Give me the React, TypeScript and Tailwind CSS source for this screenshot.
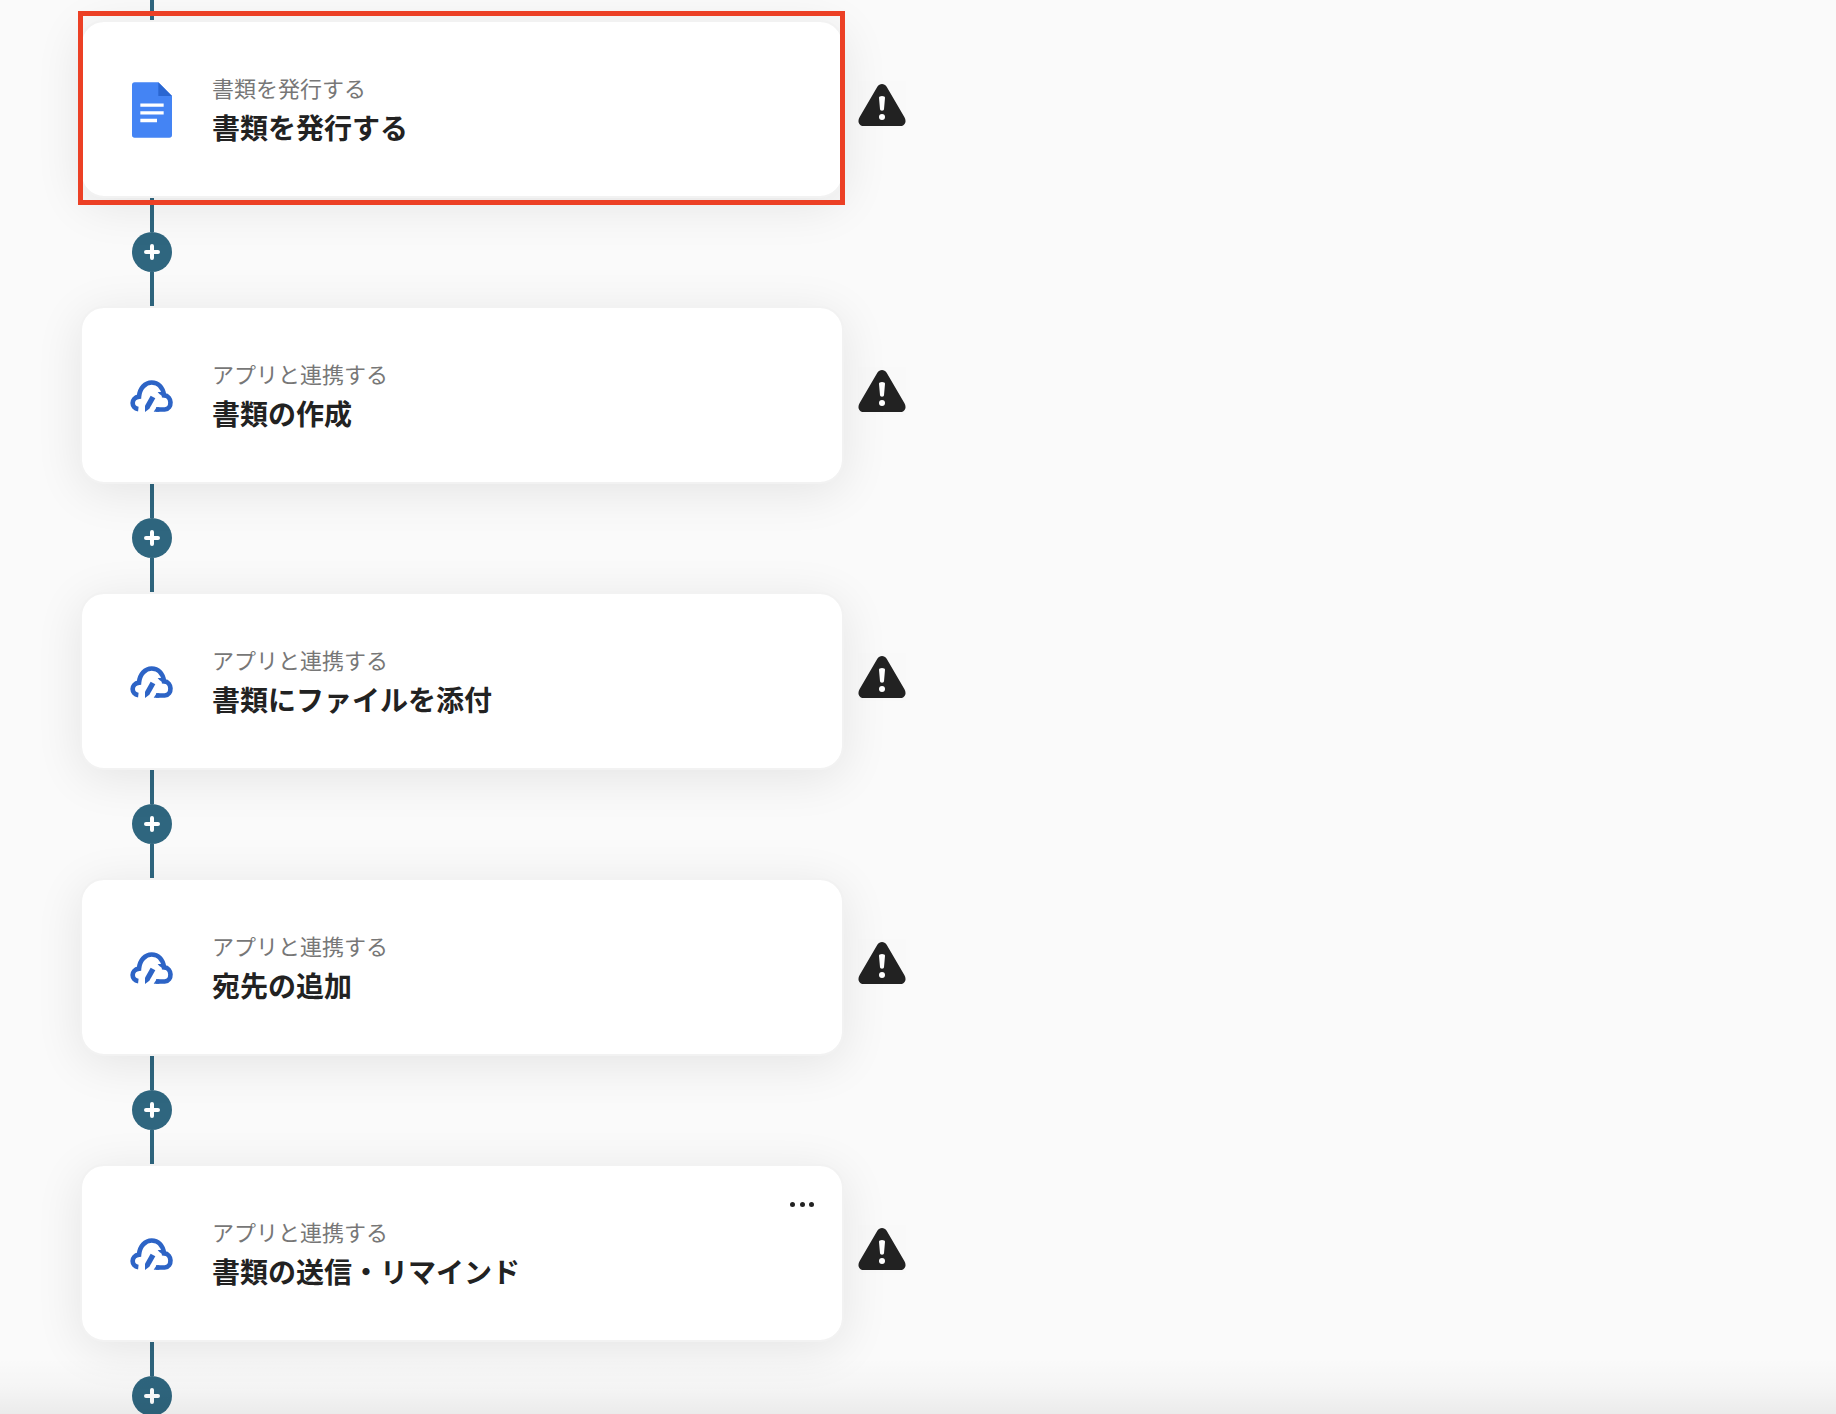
import { Fragment } from "react";

type Step = {
  kind: "document" | "app";
  label: string;
  title: string;
  selected?: boolean;
  menu?: boolean;
};

const steps: Step[] = [
  { kind: "document", label: "書類を発行する", title: "書類を発行する", selected: true },
  { kind: "app", label: "アプリと連携する", title: "書類の作成" },
  { kind: "app", label: "アプリと連携する", title: "書類にファイルを添付" },
  { kind: "app", label: "アプリと連携する", title: "宛先の追加" },
  { kind: "app", label: "アプリと連携する", title: "書類の送信・リマインド", menu: true },
];

function DocumentIcon() {
  return (
    <svg viewBox="24 30 144 174" className="h-[58px] w-12 shrink-0" aria-hidden="true">
      <path
        d="M44 37H115L156 78V195a8 8 0 0 1-8 8H44a8 8 0 0 1-8-8V45a8 8 0 0 1 8-8Z"
        fill="#4484f4"
      />
      <path d="M115 37 156 78H115Z" fill="#2a66d1" />
      <path d="M61 105.500H131M61 128.500H131M61 151.500H111" stroke="#fff" strokeWidth="10" />
    </svg>
  );
}

function CloudIcon() {
  return (
    <svg viewBox="24 33 144 144" className="size-12 shrink-0" aria-hidden="true">
      <g fill="none" stroke="#2d64c6" strokeWidth="14">
        <path d="M55 147.500C33 145 31 114 57 110C59 84 76 67.500 95 67.500C114 67.500 129 81 132 106C157 107 158 147 134 148.500H108" />
      </g>
      <path d="M113 96H134L138 113C129 110 119 105 113 96Z" fill="#2d64c6" />
      <path d="M101 155.500 110 141.500H118V155.500Z" fill="#2d64c6" />
      <path d="M92 107 106 115 88 146 75 156V137Z" fill="#2d64c6" />
    </svg>
  );
}

function WarningIcon() {
  return (
    <svg
      viewBox="39 21 144 144"
      className="mb-2 size-12 shrink-0 bg-black/[0.005]"
      role="img"
      aria-label="警告"
    >
      <path
        d="M97 38C104 27 118 27 125 38L178 129C186 142 180 156 166 156H56C42 156 36 142 44 129Z"
        fill="#222"
      />
      <path d="M102 71Q102 66 111 66T120 71L117 106Q117 110 111 110T105 106Z" fill="#fff" />
      <circle cx="111" cy="129" r="9" fill="#fff" />
    </svg>
  );
}

function Connector() {
  return (
    <div className="ml-[52px] flex h-[108px] w-10 flex-col items-center">
      <div className="w-1 flex-1 bg-[#2f667f]" />
      <button
        type="button"
        aria-label="ステップを追加"
        className="flex size-10 items-center justify-center rounded-full bg-[#2f667f] hover:bg-[#27566b]"
      >
        <svg viewBox="0 0 16 16" className="size-4" aria-hidden="true">
          <path d="M8 2V14M2 8H14" stroke="#fff" strokeWidth="4" strokeLinecap="round" />
        </svg>
      </button>
      <div className="w-1 flex-1 bg-[#2f667f]" />
    </div>
  );
}

function StepCard({ step }: { step: Step }) {
  return (
    <div className="flex items-center gap-3.5">
      <section className="relative flex h-[178px] w-full max-w-[764px] items-center gap-9 rounded-3xl border-2 border-[#f2f2f2] bg-white bg-clip-padding pl-[46px] shadow-[0_8px_48px_rgba(0,0,0,0.09)]">
        {step.kind === "document" ? <DocumentIcon /> : <CloudIcon />}
        <div>
          <p className="text-[22px] leading-9 text-[#777]">{step.label}</p>
          <h2 className="text-[28px] leading-11 font-bold text-[#222]">{step.title}</h2>
        </div>
        {step.menu && (
          <button
            type="button"
            aria-label="メニュー"
            className="absolute top-5 right-5 flex h-9 w-10 items-center justify-between px-2"
          >
            <span className="size-[5px] rounded-full bg-[#222]" />
            <span className="size-[5px] rounded-full bg-[#222]" />
            <span className="size-[5px] rounded-full bg-[#222]" />
          </button>
        )}
        {step.selected && (
          <div className="pointer-events-none absolute -top-[11px] -right-[3px] -bottom-[9px] -left-1 border-5 border-[#ec4025]" />
        )}
      </section>
      <WarningIcon />
    </div>
  );
}

export default function App() {
  return (
    <main
      lang="ja"
      className="relative h-screen overflow-hidden bg-[#fafafa] pl-20 font-['Noto_Sans_CJK_JP',sans-serif]"
    >
      <div className="ml-[70px] h-5 w-1 bg-[#2f667f]" />
      {steps.map((step, i) => (
        <Fragment key={i}>
          <StepCard step={step} />
          <Connector />
        </Fragment>
      ))}
      {/* fade at the bottom edge of the canvas */}
      <div className="pointer-events-none absolute inset-x-0 bottom-0 h-14 bg-linear-to-b from-transparent via-black/2 to-black/6" />
    </main>
  );
}
